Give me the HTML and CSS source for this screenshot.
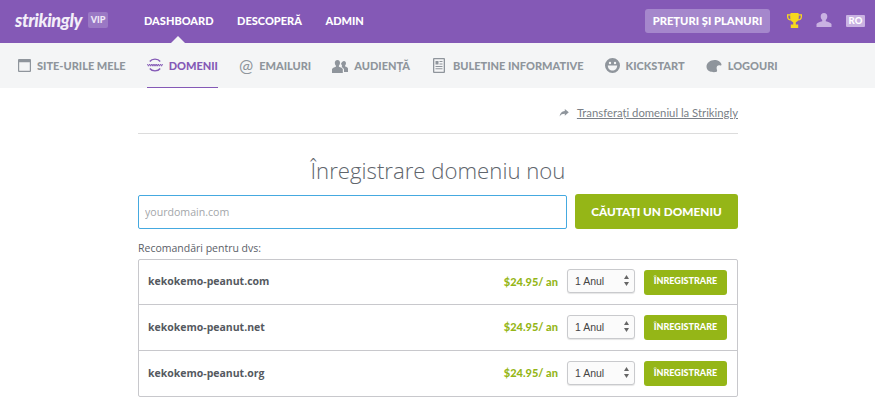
FILE: index.html
```html
<!DOCTYPE html>
<html lang="ro">
<head>
    <meta charset="UTF-8">
    <meta name="viewport" content="width=device-width, initial-scale=1.0">
    <title>Strikingly - Domenii</title>
    <link rel="stylesheet" href="styles.css">
</head>
<body>
    <header class="topbar">
        <a class="logo" href="#">strikingly</a>
        <span class="vip">VIP</span>
        <nav class="main-nav">
            <a class="main-link current" href="#">DASHBOARD</a>
            <a class="main-link" href="#">DESCOPERĂ</a>
            <a class="main-link" href="#">ADMIN</a>
        </nav>
        <div class="top-right">
            <a class="pricing" href="#">PREȚURI ȘI PLANURI</a>
            <svg class="trophy" viewBox="0 0 15 15" width="15" height="15">
                <path fill="#f7d81e" fill-rule="evenodd" d="M3.500 0h8v1.300H15v2.400c0 2.200-1.500 3.600-3.900 3.900-.5.900-1.300 1.500-2.300 1.700v2.200h2.400V15H3.800v-3.500h2.400V9.300C5.200 9.100 4.400 8.500 3.900 7.600 1.500 7.300 0 5.900 0 3.700V1.300h3.500V0zM1.300 2.600v1.100c0 1.300.8 2.200 2.100 2.500-.2-1-.2-2.400-.2-3.600H1.300zm12.400 0h-1.900c0 1.200 0 2.600-.2 3.600 1.300-.3 2.100-1.200 2.100-2.500V2.600z"/>
            </svg>
            <svg class="user" viewBox="0 0 16 14" width="16" height="14">
                <path fill="#c9b2e2" d="M8 0c2.100 0 3.300 1.500 3.300 3.400 0 1.400-.6 2.700-1.500 3.500v1.300c2.500.6 5.300 1.600 5.700 2.900V14H.5v-2.900c.4-1.300 3.200-2.300 5.700-2.900V6.900C5.300 6.100 4.700 4.800 4.700 3.400 4.700 1.500 5.900 0 8 0z"/>
            </svg>
            <span class="lang">RO</span>
        </div>
    </header>

    <nav class="subnav">
        <a class="sub-link" href="#">
            <svg viewBox="0 0 13 13" width="13" height="13"><path fill="#8f959c" fill-rule="evenodd" d="M1 0h11a1 1 0 0 1 1 1v11a1 1 0 0 1-1 1H1a1 1 0 0 1-1-1V1a1 1 0 0 1 1-1zm.2 3.200v8.600h10.600V3.200H1.200z"/></svg>
            SITE-URILE MELE
        </a>
        <a class="sub-link active" href="#">
            <svg viewBox="0 0 16 16" width="16" height="16"><path fill="none" stroke="#8459b6" stroke-width="1.300" d="M2.800 4.500C5 1.400 11 1.400 13.200 4.500M2.800 11.500C5 14.600 11 14.600 13.200 11.500"/><path fill="none" stroke="#8459b6" stroke-width="1" d="M.5 7l1 2.200L2.700 7l1 2.200L4.900 7l1 2.200L7 7l1 2.200L9.100 7l1 2.200L11.300 7l1 2.200L13.500 7l1 2.200L15.500 7"/></svg>
            DOMENII
        </a>
        <a class="sub-link" href="#"><span class="at">@</span>EMAILURI</a>
        <a class="sub-link" href="#">
            <svg viewBox="0 0 16 14" width="16" height="14"><path fill="#8f959c" d="M5.500 1c1.600 0 2.500 1.200 2.500 2.800 0 1.200-.5 2.200-1.100 2.900v1c1.900.5 3.600 1.300 3.900 2.400V14H0v-3.900c.3-1.100 2-1.900 3.900-2.400v-1C3.300 6 2.800 5 2.800 3.800 2.800 2.200 3.900 1 5.500 1zM12 2c1.300 0 2 1 2 2.300 0 1-.4 1.800-.9 2.300v.9c1.400.4 2.600 1 2.900 1.900V13h-4v-2.500c-.3-1-1.300-1.800-2.500-2.400.2-.2.400-.3.500-.5V6.600c-.5-.5-.9-1.300-.9-2.300C10 3 10.700 2 12 2z"/></svg>
            AUDIENȚĂ
        </a>
        <a class="sub-link" href="#">
            <svg class="news-icon" viewBox="0 0 12 15" width="12" height="15"><path fill="#8f959c" fill-rule="evenodd" d="M1 0h10a1 1 0 0 1 1 1v13a1 1 0 0 1-1 1H1a1 1 0 0 1-1-1V1a1 1 0 0 1 1-1zm.3 1.300v12.400h9.400V1.300H1.300zM2.500 3h3v3.500h-3V3zm4 0h3v1h-3V3zm0 2.500h3v1h-3v-1zm-4 2.500h7v1h-7V8zm0 2.300h7v1h-7v-1z"/></svg>
            BULETINE INFORMATIVE
        </a>
        <a class="sub-link" href="#">
            <svg viewBox="0 0 15 15" width="15" height="15"><path fill="#8f959c" fill-rule="evenodd" d="M7.500 0a7.500 7.500 0 1 1 0 15 7.500 7.500 0 0 1 0-15zM5 3.800a1.200 1.200 0 1 0 0 2.400 1.200 1.200 0 0 0 0-2.400zm5 0a1.200 1.200 0 1 0 0 2.400 1.200 1.200 0 0 0 0-2.400zM2.800 7.500c0 3 2.100 5 4.700 5s4.700-2 4.700-5H2.800z"/></svg>
            KICKSTART
        </a>
        <a class="sub-link" href="#">
            <svg viewBox="0 0 16 14" width="16" height="14"><path fill="#8f959c" d="M8.500 1C12 1 15 3 15.500 5.500c.1.800-.6 1.200-1.300 1-1.200-.4-2.300-.2-3 .6-.9 1.100-.6 2.700-.2 3.900.3 1 0 1.800-1 2-3.500.6-9.500-.3-9.500-5.500C.5 3.900 4.500 1 8.500 1z"/></svg>
            LOGOURI
        </a>
    </nav>

    <main class="content">
        <div class="transfer-row">
            <svg viewBox="0 0 12 10" width="10" height="8"><path fill="#8f959c" d="M7 0l5 4.200L7 8.500V6C4 6 2 6.800.5 9.500.8 5.500 3 2.700 7 2.500V0z"/></svg>
            <a class="transfer-link" href="#">Transferați domeniul la Strikingly</a>
        </div>

        <h1 class="title">Înregistrare domeniu nou</h1>

        <form class="search">
            <input class="search-input" type="text" placeholder="yourdomain.com">
            <button class="search-btn" type="button">CĂUTAȚI UN DOMENIU</button>
        </form>

        <p class="rec-label">Recomandări pentru dvs:</p>

        <div class="results">
            <div class="result">
                <span class="domain">kekokemo-peanut.com</span>
                <span class="price">$24.95/ an</span>
                <div class="year-select">
                    <select class="year"><option>1 Anul</option></select>
                    <svg class="arrows" viewBox="0 0 5 11" width="5" height="11"><path fill="#666" d="M2.500 0L5 4H0zM2.500 11L0 7h5z"/></svg>
                </div>
                <button class="buy-btn" type="button">ÎNREGISTRARE</button>
            </div>
            <div class="result">
                <span class="domain">kekokemo-peanut.net</span>
                <span class="price">$24.95/ an</span>
                <div class="year-select">
                    <select class="year"><option>1 Anul</option></select>
                    <svg class="arrows" viewBox="0 0 5 11" width="5" height="11"><path fill="#666" d="M2.500 0L5 4H0zM2.500 11L0 7h5z"/></svg>
                </div>
                <button class="buy-btn" type="button">ÎNREGISTRARE</button>
            </div>
            <div class="result">
                <span class="domain">kekokemo-peanut.org</span>
                <span class="price">$24.95/ an</span>
                <div class="year-select">
                    <select class="year"><option>1 Anul</option></select>
                    <svg class="arrows" viewBox="0 0 5 11" width="5" height="11"><path fill="#666" d="M2.500 0L5 4H0zM2.500 11L0 7h5z"/></svg>
                </div>
                <button class="buy-btn" type="button">ÎNREGISTRARE</button>
            </div>
        </div>
    </main>
</body>
</html>
```
FILE: styles.css
```css
* {
    box-sizing: border-box;
}
html, body {
    height: 407px;
    overflow: hidden;
}
body {
    margin: 0;
    font-family: "Open Sans", sans-serif;
    background: white;
    color: #5b6068;
}
a {
    text-decoration: none;
}

/* top bar */
.topbar {
    height: 43px;
    background: #8459b6;
    display: flex;
    align-items: center;
    padding-left: 15px;
}
.logo {
    font-family: "Lato", sans-serif;
    font-weight: 900;
    font-style: italic;
    font-size: 18px;
    letter-spacing: -0.4px;
    color: #f3eef9;
    width: 73px;
    margin-top: -3px;
}
.vip {
    width: 20px;
    height: 16px;
    margin-top: -3px;
    background: #9a78c4;
    border-radius: 2px;
    color: #f0e9f8;
    font-family: "Lato", sans-serif;
    font-weight: 900;
    font-size: 9px;
    line-height: 16px;
    text-align: center;
}
.main-nav {
    display: flex;
    gap: 23.5px;
    margin-left: 36px;
    height: 43px;
}
.main-link {
    position: relative;
    font-family: "Lato", sans-serif;
    font-weight: 900;
    font-size: 11px;
    line-height: 42px;
    color: white;
}
.main-link.current::after {
    content: "";
    position: absolute;
    left: 27px;
    bottom: 0;
    border-left: 7px solid transparent;
    border-right: 7px solid transparent;
    border-bottom: 7px solid #f4f5f6;
}
.top-right {
    margin-left: auto;
    display: flex;
    align-items: center;
    padding-right: 10px;
}
.pricing {
    width: 125px;
    height: 24px;
    margin-top: -2px;
    background: #a587cc;
    border-radius: 3px;
    color: white;
    font-family: "Lato", sans-serif;
    font-weight: 900;
    font-size: 11.2px;
    line-height: 24px;
    text-align: center;
}
.trophy {
    margin-left: 17px;
    margin-top: -3px;
}
.user {
    margin-left: 14px;
    margin-top: -3px;
}
.lang {
    width: 19px;
    height: 12px;
    margin-left: 14px;
    margin-top: -2px;
    background: #c9b2e2;
    color: white;
    border-radius: 1px;
    font-family: "Lato", sans-serif;
    font-weight: 900;
    font-size: 9.5px;
    line-height: 12px;
    text-align: center;
}

/* second row */
.subnav {
    height: 45px;
    background: #f4f5f6;
    display: flex;
    gap: 21px;
    padding-left: 18px;
}
.sub-link {
    display: flex;
    align-items: center;
    gap: 6px;
    height: 45px;
    font-family: "Lato", sans-serif;
    font-weight: 900;
    font-size: 11px;
    color: #8f959c;
}
.sub-link.active {
    color: #8459b6;
    border-bottom: 1px solid #8459b6;
}
.at {
    font-size: 17px;
    font-weight: 400;
    line-height: 1;
}
.news-icon {
    margin: 0 2px;
}

/* content */
.content {
    width: 600px;
    margin-left: 138px;
}
.transfer-row {
    height: 46px;
    border-bottom: 1px solid #dcdcdc;
    display: flex;
    justify-content: flex-end;
    align-items: center;
    gap: 8px;
    padding-top: 4px;
    font-family: "Lato", sans-serif;
    font-size: 11.3px;
}
.transfer-link {
    color: #7a7f87;
    text-decoration: underline;
}
.title {
    margin: 20px 0 0;
    font-weight: 300;
    font-size: 22.2px;
    line-height: 34px;
    text-align: center;
    color: #60656c;
}
.search {
    display: flex;
    gap: 8px;
    margin-top: 6px;
}
.search-input {
    width: 429px;
    height: 34px;
    margin-top: 1px;
    padding: 0 6px;
    border: 1px solid #45a9e0;
    border-radius: 2px;
    font-family: "Open Sans", sans-serif;
    font-size: 10.6px;
    outline: none;
}
.search-input::placeholder {
    color: #a3a6aa;
}
.search-btn {
    width: 163px;
    height: 35px;
    border: none;
    border-radius: 3px;
    background: #95b617;
    color: white;
    font-family: "Lato", sans-serif;
    font-weight: 900;
    font-size: 11.8px;
    padding: 0;
}
.rec-label {
    margin: 11px 0 0;
    font-size: 10.5px;
    line-height: 17px;
    color: #5b6068;
}
.results {
    margin-top: 2px;
    border: 1px solid #c8c8cc;
    border-radius: 2px;
}
.result {
    height: 46px;
    display: flex;
    align-items: center;
    padding: 0 10px 0 9px;
    border-top: 1px solid #c8c8cc;
}
.result:first-child {
    height: 44px;
    border-top: none;
}
.domain {
    margin-bottom: 2px;
    font-weight: 700;
    font-size: 10.5px;
    color: #55595f;
}
.price {
    margin-left: auto;
    margin-bottom: 2px;
    font-family: "Lato", sans-serif;
    font-weight: 900;
    font-size: 11px;
    color: #95b617;
}
.year-select {
    position: relative;
    margin-left: 9px;
    margin-top: -2px;
}
.year {
    display: block;
    width: 68px;
    height: 24px;
    padding: 0 7px;
    appearance: none;
    border: 1px solid #c9cacd;
    border-radius: 3px;
    background: #fbfbfb;
    box-shadow: 0 1px 1px rgba(0, 0, 0, 0.1);
    font-family: "Liberation Sans", sans-serif;
    font-size: 10.5px;
    color: #444;
}
.arrows {
    position: absolute;
    right: 6px;
    top: 6px;
}
.buy-btn {
    width: 83px;
    height: 25px;
    margin-left: 9px;
    border: none;
    border-radius: 3px;
    background: #95b617;
    color: white;
    font-family: "Lato", sans-serif;
    font-weight: 900;
    font-size: 9px;
    padding: 0 0 3px;
}
```
